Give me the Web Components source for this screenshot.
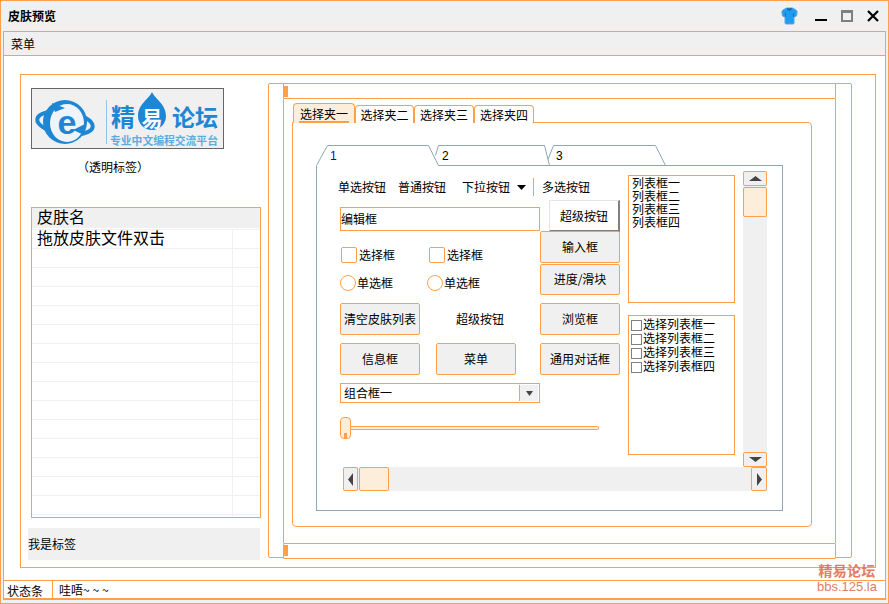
<!DOCTYPE html>
<html lang="zh">
<head>
<meta charset="utf-8">
<title>皮肤预览</title>
<style>
html, body { margin: 0; padding: 0; background: #fff; }
body { font: 12px/14px "Noto Sans CJK SC", "Liberation Sans", sans-serif; color: #000; }
</style>
</head>
<body>
<skin-window caption="皮肤预览">
  <skin-preview></skin-preview>
</skin-window>

<script>
const ORANGE = '#ff9f4a';

function tpl(html) {
  const t = document.createElement('template');
  t.innerHTML = html;
  return t;
}

// helper so every element only has to give its template
class Base extends HTMLElement {
  constructor(template) {
    super();
    this.attachShadow({mode: 'open'});
    this.shadowRoot.appendChild(template.content.cloneNode(true));
  }
}

// ---------- window frame ----------
const windowTpl = tpl(`
<style>
:host { display: flex; flex-direction: column; box-sizing: border-box; width: 889px; height: 604px; border: 1px solid ${ORANGE}; padding: 0 2px 3px; background: #f0f0f0; position: relative; overflow: hidden; }
.title { height: 30px; flex: none; display: flex; align-items: center; padding-left: 5px; font-weight: 700; }
.title span { flex: 1; }
.title svg { display: block; flex: none; }
.menu { height: 25px; flex: none; box-sizing: border-box; border: 1px solid ${ORANGE}; background: #f0f0f0; padding: 5px 7px; }
.client { flex: 1; min-height: 0; background: #fff; border: solid ${ORANGE}; border-width: 0 1px; }
.status { height: 20px; flex: none; box-sizing: border-box; background: #fff; border: 1px solid ${ORANGE}; border-bottom-width: 2px; display: flex; align-items: center; }
.status .a { width: 49px; box-sizing: border-box; padding-left: 3px; height: 100%; border-right: 1px solid ${ORANGE}; line-height: 19px; }
.status .b { padding-left: 6px; line-height: 19px; }
.status .b span { letter-spacing: 2.800px; }
.mark { position: absolute; right: 10px; bottom: 9px; width: 62px; text-align: center; color: #e0775a; font-family: "Liberation Sans", "Noto Sans CJK SC", sans-serif; font-size: 13px; line-height: 15px; opacity: .95; }
.mark b { display: block; font-size: 14px; line-height: 16px; letter-spacing: .3px; }
</style>
<div class="title">
  <span id="cap"></span>
  <svg width="17" height="18" viewBox="0 0 17 18" style="margin-right:17px">
    <path d="M5.500 1h6l3.500 2q1.500 1 1 3l-.5 3-2.500 1v6q0 1-1 1H5q-1 0-1-1v-6L1.500 9 1 6Q.5 4 2 3z" fill="#1f9cf0" stroke="#5aa5dc" stroke-width="1"/>
    <path d="M6 1.500l2.500 2 2.500-2" fill="#17609c" stroke="#17609c" stroke-width="1"/>
    <path d="M4.500 10V6M12.500 10V6" fill="none" stroke="#1078cc" stroke-width="1"/>
  </svg>
  <svg width="12" height="12" viewBox="0 0 12 12" style="margin-right:14px"><rect x="0" y="9" width="12" height="2" fill="#000"/></svg>
  <svg width="12" height="12" viewBox="0 0 12 12" style="margin-right:14px"><rect x="1" y="1" width="10" height="10" fill="none" stroke="#808080" stroke-width="2"/><rect x="1" y="1" width="10" height="2" fill="#808080"/></svg>
  <svg width="12" height="12" viewBox="0 0 12 12" style="margin-right:7px"><path d="M1 1l10 10M11 1L1 11" stroke="#000" stroke-width="2.200" fill="none"/></svg>
</div>
<div class="menu">菜单</div>
<div class="client"><slot></slot></div>
<div class="status"><div class="a">状态条</div><div class="b">哇唔<span>~~~</span></div></div>
<div class="mark"><b>精易论坛</b>bbs.125.la</div>
`);
class SkinWindow extends Base {
  constructor() { super(windowTpl); }
  connectedCallback() { this.shadowRoot.querySelector('#cap').textContent = this.getAttribute('caption'); }
}

// ---------- logo ----------
const logoTpl = tpl(`
<style>
:host { display: block; width: 193px; height: 61px; box-sizing: border-box; border: 1px solid #666; background: #f0f0f0; }
svg { display: block; }
text { font-family: "Noto Sans CJK SC", sans-serif; }
</style>
<svg width="191" height="59" viewBox="1 1 191 59">
  <ellipse cx="34" cy="35" rx="28" ry="11" fill="none" stroke="#1f86d4" stroke-width="4" transform="rotate(8 34 35)"/>
  <circle cx="34" cy="34" r="22" fill="#1f86d4"/>
  <ellipse cx="36" cy="35" rx="17" ry="19" fill="#eef4fa"/>
  <text x="36" y="46" font-size="34" font-weight="700" fill="#1f86d4" text-anchor="middle" style="font-family:'Liberation Sans',sans-serif">e</text>
  <path d="M21 15l13 5-10 4zM42 42l12-6-1 11z" fill="#1f86d4"/>
  <rect x="75" y="12" width="1" height="44" fill="#8cc4ea"/>
  <text x="80" y="38" font-size="24" font-weight="700" fill="#1f86d4">精</text>
  <path d="M121 4c3 7 14 12 14 24a14 14 0 0 1-28 0c0-12 11-17 14-24z" fill="#1f86d4"/>
  <text x="110.500" y="38" font-size="21" font-weight="700" fill="#fff">易</text>
  <text x="141" y="38" font-size="23" font-weight="700" fill="#1f86d4">论坛</text>
  <text x="79" y="57" font-size="10.800" font-weight="700" fill="#5aaee0">专业中文编程交流平台</text>
</svg>
`);
class JyLogo extends Base { constructor() { super(logoTpl); } }

// ---------- orange button ----------
const buttonTpl = tpl(`
<style>
:host { display: flex; align-items: center; justify-content: center; box-sizing: border-box; width: 80px; height: 32px; border: 1px solid ${ORANGE}; border-radius: 2px; background: #f0f0f0; white-space: nowrap; flex: none; }
:host([super]) { width: 71px; background: #fff; border: solid; border-width: 1px 2px 2px 1px; border-color: #e4e4e4 #808080 #808080 #e4e4e4; border-radius: 0; }
:host([plain]) { background: none; border-color: transparent; padding-left: 8px; }
</style>
<slot></slot>
`);
class SkinButton extends Base { constructor() { super(buttonTpl); } }

// ---------- check box / radio ----------
const checkTpl = tpl(`
<style>
:host { display: flex; align-items: center; height: 16px; white-space: nowrap; flex: none; }
i { display: block; box-sizing: border-box; width: 16px; height: 16px; border: 1px solid ${ORANGE}; border-radius: 2px; margin-right: 2px; background: #fff; }
:host([round]) i { border-radius: 50%; margin-right: 1px; }
</style>
<i></i><slot></slot>
`);
class SkinCheck extends Base { constructor() { super(checkTpl); } }

// ---------- single/check list ----------
const listTpl = tpl(`
<style>
:host { display: block; box-sizing: border-box; width: 107px; border: 1px solid ${ORANGE}; background: #fff; padding: 2px 3px; line-height: 13px; font-family: "Liberation Sans", "Noto Sans CJK SC", sans-serif; }
</style>
<slot></slot>
`);
class SkinList extends Base { constructor() { super(listTpl); } }

const checkRowTpl = tpl(`
<style>
:host { display: flex; align-items: center; height: 14px; line-height: 14px; white-space: nowrap; margin-left: -1px; }
i { display: block; box-sizing: border-box; width: 11px; height: 11px; border: 1px solid #808080; margin-right: 1px; }
</style>
<i></i><slot></slot>
`);
class SkinCheckRow extends Base { constructor() { super(checkRowTpl); } }

// ---------- combo ----------
const comboTpl = tpl(`
<style>
:host { display: flex; box-sizing: border-box; width: 200px; height: 20px; border: 1px solid ${ORANGE}; background: #fff; line-height: 18px; }
span { flex: 1; padding-left: 3px; }
div { width: 18px; border-left: 1px solid ${ORANGE}; display: flex; align-items: center; justify-content: center; background: #f0f0f0; margin: 1px 1px 1px 0; }
</style>
<span><slot></slot></span>
<div><svg width="7" height="5" viewBox="0 0 7 5"><path d="M0 0h7L3.500 5z" fill="#444"/></svg></div>
`);
class SkinCombo extends Base { constructor() { super(comboTpl); } }

// ---------- slider ----------
const sliderTpl = tpl(`
<style>
:host { display: flex; align-items: center; width: 259px; height: 22px; flex: none; }
.thumb { box-sizing: border-box; width: 11px; height: 22px; border: 1px solid ${ORANGE}; border-radius: 4px; background: #fdeedc; position: relative; flex: none; }
.thumb::after { content: ""; position: absolute; left: 3px; bottom: 0; width: 3px; height: 5px; background: ${ORANGE}; }
.track { width: 248px; height: 4px; flex: none; box-sizing: border-box; border: 1px solid ${ORANGE}; border-left: 0; border-radius: 0 2px 2px 0; background: #fdeedc; }
</style>
<div class="thumb"></div><div class="track"></div>
`);
class SkinSlider extends Base { constructor() { super(sliderTpl); } }

// ---------- scroll bars ----------
const vscrollTpl = tpl(`
<style>
:host { display: flex; flex-direction: column; width: 24px; background: #f0f0f0; flex: none; }
.btn { box-sizing: border-box; height: 15px; border: 1px solid ${ORANGE}; border-radius: 2px; display: flex; align-items: center; justify-content: center; background: #f0f0f0; flex: none; }
.thumb { box-sizing: border-box; height: 30px; margin-top: 1px; border: 1px solid ${ORANGE}; border-radius: 2px; background: #fdeedc; flex: none; }
.fill { flex: 1; }
</style>
<div class="btn"><svg width="13" height="5" viewBox="0 0 13 5"><path d="M0 5L4 2 6.500 0 9 2 13 5z" fill="#444"/></svg></div>
<div class="thumb"></div>
<div class="fill"></div>
<div class="btn"><svg width="13" height="5" viewBox="0 0 13 5"><path d="M0 0L4 3 6.500 5 9 3 13 0z" fill="#444"/></svg></div>
`);
class SkinVScroll extends Base { constructor() { super(vscrollTpl); } }

const hscrollTpl = tpl(`
<style>
:host { display: flex; height: 24px; background: #f0f0f0; flex: none; }
.btn { box-sizing: border-box; width: 15px; border: 1px solid ${ORANGE}; border-radius: 2px; display: flex; align-items: center; justify-content: center; flex: none; }
.btn.r { width: 16px; }
.thumb { box-sizing: border-box; width: 30px; margin-left: 1px; border: 1px solid ${ORANGE}; border-radius: 2px; background: #fdeedc; flex: none; }
.fill { flex: 1; }
</style>
<div class="btn"><svg width="5" height="13" viewBox="0 0 5 13"><path d="M5 0L2 4 0 6.500 2 9 5 13z" fill="#444"/></svg></div>
<div class="thumb"></div>
<div class="fill"></div>
<div class="btn r"><svg width="5" height="13" viewBox="0 0 5 13"><path d="M0 0L3 4 5 6.500 3 9 0 13z" fill="#444"/></svg></div>
`);
class SkinHScroll extends Base { constructor() { super(hscrollTpl); } }

// thin bars on top and bottom of the big frame
const thinBarTpl = tpl(`
<style>
:host { display: block; box-sizing: border-box; height: 16px; border: 1px solid ${ORANGE}; border-radius: 1px; background: #fff; flex: none; padding-top: 2px; }
:host([low]) { padding-top: 1px; }
i { display: block; width: 5px; height: 11px; background: ${ORANGE}; margin-left: -1px; }
</style>
<i></i>
`);
class ThinBar extends Base { constructor() { super(thinBarTpl); } }

// ---------- skin name table ----------
const tableTpl = tpl(`
<style>
:host { display: block; box-sizing: border-box; width: 230px; height: 311px; border: 1px solid ${ORANGE}; font: 16px "Liberation Sans", "Noto Sans CJK SC", sans-serif; overflow: hidden; background: #fff; }
.head { height: 20px; background: #f0f0f0; padding-left: 5px; line-height: 19px; }
.rows { background:
  repeating-linear-gradient(to bottom, #f0f0f0 0, #f0f0f0 1px, transparent 1px, transparent 19px),
  linear-gradient(to right, transparent 200px, #f0f0f0 200px, #f0f0f0 201px, transparent 201px);
  height: 289px; margin-top: 1px; padding-left: 5px; line-height: 19px; }
</style>
<div class="head">皮肤名</div>
<div class="rows"><slot></slot></div>
`);
class SkinTable extends Base { constructor() { super(tableTpl); } }

// ---------- top tab control (选择夹) ----------
const tabsTpl = tpl(`
<style>
:host { display: flex; flex-direction: column; width: 520px; height: 424px; flex: none; }
.strip { display: flex; height: 20px; flex: none; align-items: flex-end; position: relative; z-index: 1; }
.tab { box-sizing: border-box; height: 18px; border: 1px solid ${ORANGE}; border-bottom: 0; border-radius: 4px 4px 0 0; background: #fff; text-align: center; line-height: 17px; width: 60px; }
.tab.on { height: 20px; width: 62px; margin-left: 1px; background: #fdeedc; line-height: 20px; position: relative; }
.tab.on::after { content: ""; position: absolute; left: 5px; right: 5px; bottom: 0; height: 2px; background: ${ORANGE}; }
.panel { flex: 1; min-height: 0; box-sizing: border-box; margin-top: -1px; border: 1px solid ${ORANGE}; border-radius: 0 4px 4px 4px; padding: 22px 0 0 23px; }
</style>
<div class="strip">
  <div class="tab on">选择夹一</div><div class="tab" style="width:59px">选择夹二</div><div class="tab">选择夹三</div><div class="tab">选择夹四</div>
</div>
<div class="panel"><slot></slot></div>
`);
class SkinTabs extends Base { constructor() { super(tabsTpl); } }

// ---------- slanted tabs 1 2 3 ----------
const slantTpl = tpl(`
<style>
:host { display: flex; flex-direction: column; width: 467px; height: 366px; flex: none; }
svg { display: block; flex: none; }
text { font: 12px "Liberation Sans", sans-serif; }
.page { flex: 1; min-height: 0; box-sizing: border-box; border: 1px solid #8fa8b6; border-top: 0; position: relative; }
</style>
<svg width="467" height="21" viewBox="0 0 467 21">
  <g fill="#fff" stroke="#8fa8b6" stroke-width="1">
    <path d="M229.500 20.500L237.500 .5H339.500L349.500 20.500"/>
    <path d="M119.500 10.500L122.500 .5H228.500L233.500 20.500"/>
    <path d="M.5 20.500L11.500 .5H112.500L122.500 20.500"/>
    <path d="M122 20.500H467" fill="none"/>
  </g>
  <text x="14" y="15" fill="#0000ee">1</text>
  <text x="126" y="15" fill="#000">2</text>
  <text x="240" y="15" fill="#000">3</text>
</svg>
<div class="page"><slot></slot></div>
`);
class SlantTabs extends Base { constructor() { super(slantTpl); } }

// ---------- the demo form inside page 1 ----------
const formTpl = tpl(`
<style>
:host { display: flex; flex-direction: column; height: 100%; }
.top { display: flex; height: 301px; flex: none; padding-left: 23px; }
.form { width: 280px; flex: none; display: flex; flex-direction: column; }
.tools { display: flex; align-items: center; height: 20px; margin: 11px 0 0 -2px; white-space: nowrap; flex: none; }
.tools hr { width: 1px; height: 18px; margin: 0 8px 0 7px; border: 0; background: ${ORANGE}; }
.two { display: flex; margin-top: 3px; }
.left { width: 200px; flex: none; display: flex; flex-direction: column; }
.right { width: 80px; flex: none; display: flex; flex-direction: column; align-items: flex-end; }
.edit { box-sizing: border-box; height: 24px; margin-top: 7px; border: 1px solid ${ORANGE}; line-height: 22px; flex: none; }
.row { display: flex; flex: none; }
.lists { margin: 9px 8px 0 8px; width: 107px; flex: none; }
.lists skin-list { height: 128px; }
.lists skin-list + skin-list { height: 140px; margin-top: 12px; }
skin-vscroll { margin-top: 5px; height: 296px; }
skin-hscroll { margin-left: 26px; width: 424px; }
</style>
<div class="top">
  <div class="form">
    <div class="tools">
      <span style="margin-right:12px">单选按钮</span>
      <span style="margin-right:16px">普通按钮</span>
      <span>下拉按钮</span>
      <svg width="9" height="5" viewBox="0 0 9 5" style="margin-left:7px"><path d="M0 0h9L4.500 5z" fill="#000"/></svg>
      <hr>
      <span>多选按钮</span>
    </div>
    <div class="two">
      <div class="left">
        <div class="edit">编辑框</div>
        <div class="row" style="margin:16px 0 0 1px"><skin-check style="width:88px">选择框</skin-check><skin-check>选择框</skin-check></div>
        <div class="row" style="margin-top:12px"><skin-check round style="width:87px">单选框</skin-check><skin-check round>单选框</skin-check></div>
        <div class="row" style="margin-top:12px;gap:16px"><skin-button>清空皮肤列表</skin-button><skin-button plain>超级按钮</skin-button></div>
        <div class="row" style="margin-top:8px;gap:16px"><skin-button>信息框</skin-button><skin-button>菜单</skin-button></div>
        <skin-combo style="margin-top:8px;flex:none">组合框一</skin-combo>
        <skin-slider style="margin-top:14px"></skin-slider>
      </div>
      <div class="right">
        <skin-button super>超级按钮</skin-button>
        <skin-button style="margin-top:-1px">输入框</skin-button>
        <skin-button style="margin-top:1px;height:31px;padding-bottom:2px">进度/滑块</skin-button>
        <skin-button style="margin-top:8px">浏览框</skin-button>
        <skin-button style="margin-top:8px">通用对话框</skin-button>
      </div>
    </div>
  </div>
  <div class="lists">
    <skin-list>列表框一<br>列表框二<br>列表框三<br>列表框四</skin-list>
    <skin-list>
      <skin-check-row>选择列表框一</skin-check-row>
      <skin-check-row>选择列表框二</skin-check-row>
      <skin-check-row>选择列表框三</skin-check-row>
      <skin-check-row>选择列表框四</skin-check-row>
    </skin-list>
  </div>
  <skin-vscroll></skin-vscroll>
</div>
<skin-hscroll></skin-hscroll>
`);
class DemoForm extends Base { constructor() { super(formTpl); } }

// ---------- whole client area ----------
const previewTpl = tpl(`
<style>
:host { display: block; box-sizing: border-box; height: 100%; padding: 18px 9px 12px 16px; }
.group { display: flex; box-sizing: border-box; height: 494px; border: 1px solid ${ORANGE}; }
.side { width: 247px; flex: none; box-sizing: border-box; padding: 13px 0 0 7px; display: flex; flex-direction: column; }
.side jy-logo, .side skin-table { margin-left: 3px; flex: none; }
.glass { height: 58px; flex: none; box-sizing: border-box; padding-top: 11px; margin-left: 3px; width: 164px; text-align: center; }
.tag { box-sizing: border-box; width: 232px; height: 32px; margin-top: 10px; background: #f0f0f0; line-height: 32px; flex: none; }
.frame { box-sizing: border-box; width: 584px; height: 475px; margin-top: 8px; border: 1px solid ${ORANGE}; border-radius: 2px; padding-left: 14px; }
.inner { display: flex; flex-direction: column; width: 553px; height: 476px; margin-top: -1px; }
.mid { flex: 1; min-height: 0; border: solid ${ORANGE}; border-width: 0 1px; padding: 4px 0 0 8px; }
</style>
<div class="group">
  <div class="side">
    <jy-logo></jy-logo>
    <div class="glass">（透明标签）</div>
    <skin-table>拖放皮肤文件双击</skin-table>
    <div class="tag">我是标签</div>
  </div>
  <div class="frame">
    <div class="inner">
      <thin-bar></thin-bar>
      <div class="mid">
        <skin-tabs>
          <slant-tabs><demo-form></demo-form></slant-tabs>
        </skin-tabs>
      </div>
      <thin-bar low></thin-bar>
    </div>
  </div>
</div>
`);
class SkinPreview extends Base { constructor() { super(previewTpl); } }

customElements.define('skin-window', SkinWindow);
customElements.define('jy-logo', JyLogo);
customElements.define('skin-button', SkinButton);
customElements.define('skin-check', SkinCheck);
customElements.define('skin-list', SkinList);
customElements.define('skin-check-row', SkinCheckRow);
customElements.define('skin-combo', SkinCombo);
customElements.define('skin-slider', SkinSlider);
customElements.define('skin-vscroll', SkinVScroll);
customElements.define('skin-hscroll', SkinHScroll);
customElements.define('thin-bar', ThinBar);
customElements.define('skin-table', SkinTable);
customElements.define('skin-tabs', SkinTabs);
customElements.define('slant-tabs', SlantTabs);
customElements.define('demo-form', DemoForm);
customElements.define('skin-preview', SkinPreview);
</script>
</body>
</html>
